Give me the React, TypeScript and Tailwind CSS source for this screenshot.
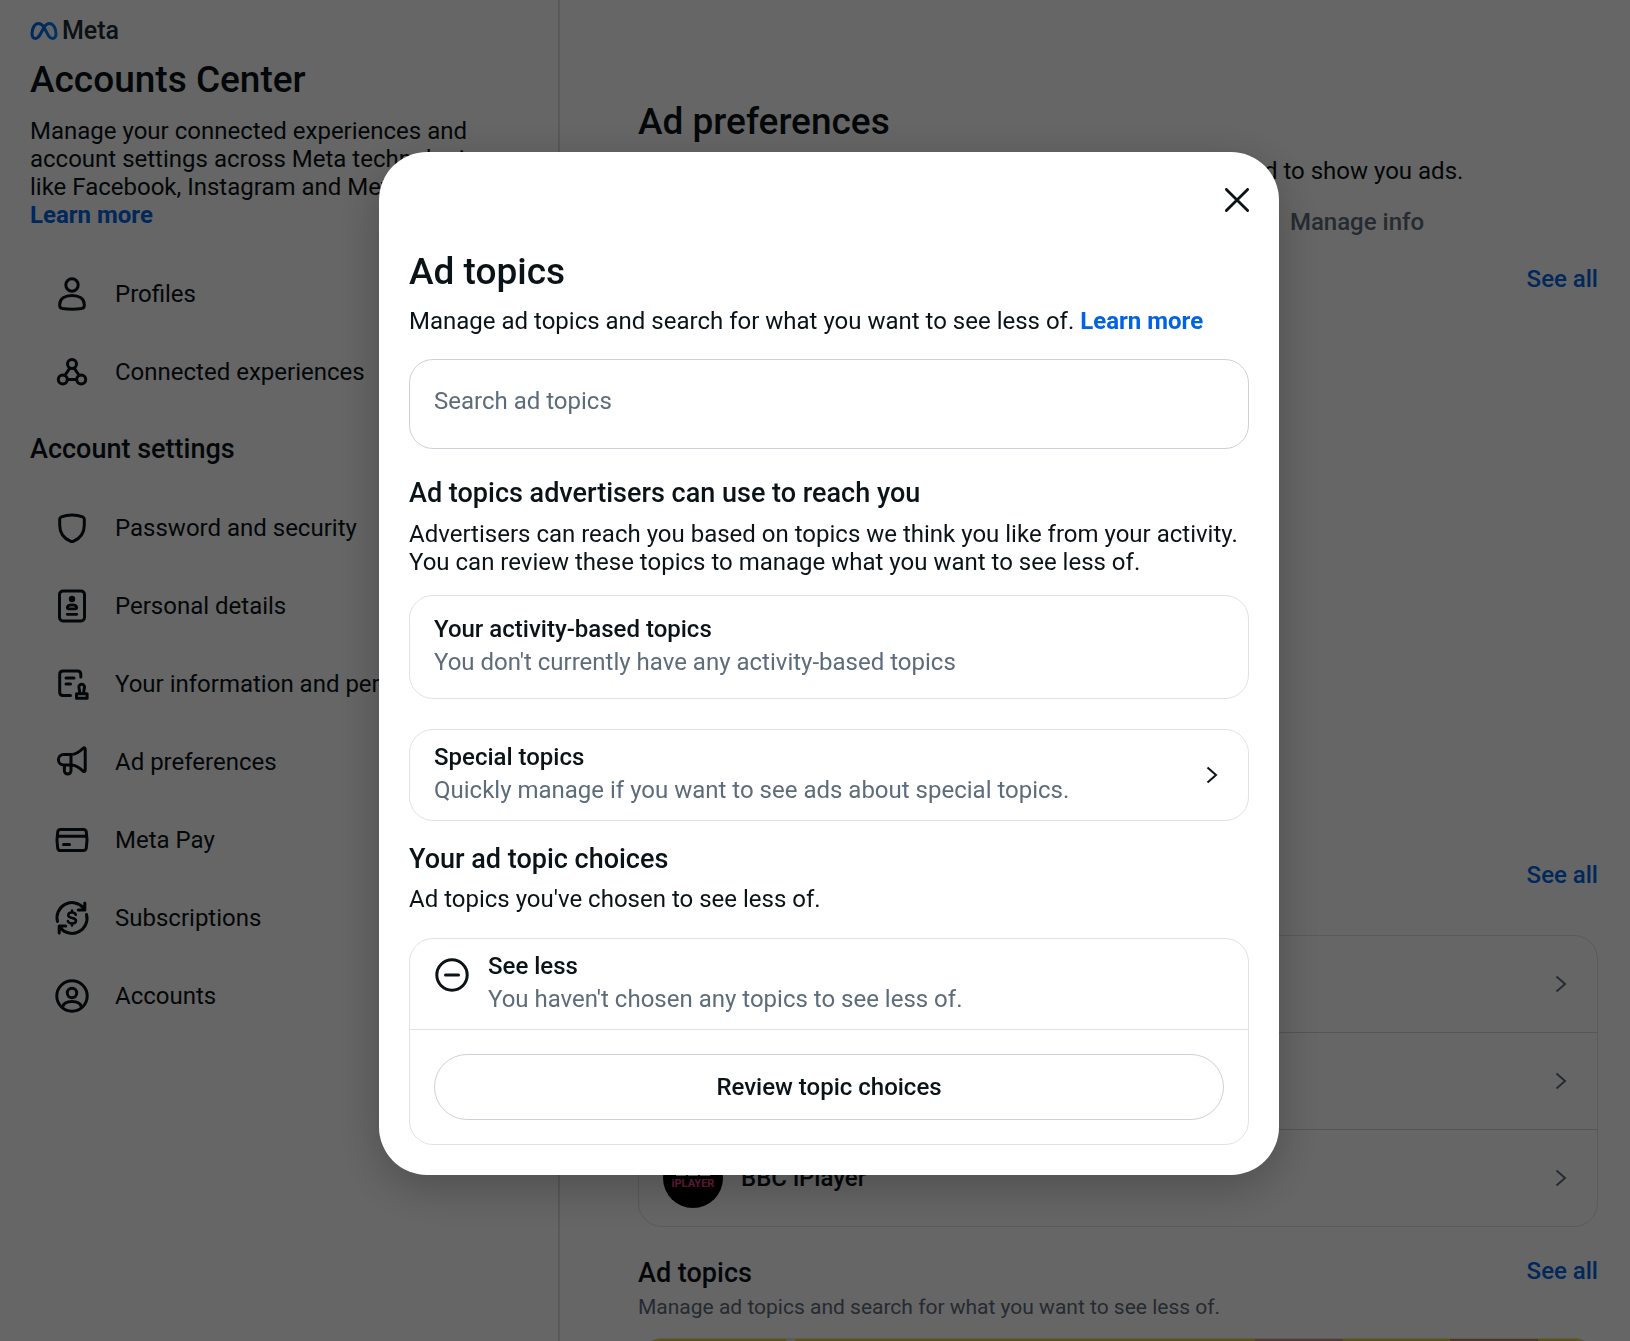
import { useState } from 'react';
import type { ReactNode } from 'react';

interface NavItem {
  label: string;
  icon: ReactNode;
}

const stroke = {
  fill: 'none',
  stroke: 'currentColor',
  strokeWidth: 3,
  strokeLinecap: 'round' as const,
  strokeLinejoin: 'round' as const,
};

function Icon({ children }: { children: ReactNode }) {
  return (
    <svg viewBox="0 0 36 36" className="size-9 shrink-0" aria-hidden="true" {...stroke}>
      {children}
    </svg>
  );
}

function Chevron({ className = '' }: { className?: string }) {
  return (
    <svg viewBox="0 0 12 18" className={`h-[18px] w-3 shrink-0 ${className}`} aria-hidden="true" fill="none" stroke="currentColor" strokeWidth="2">
      <path d="M1.5 1.500 10 9l-8.500 7.500" />
    </svg>
  );
}

function MetaMark() {
  return (
    <svg viewBox="0 0 28 20" className="h-5 w-7 shrink-0" aria-hidden="true" fill="none" strokeWidth="3">
      <defs>
        <linearGradient id="meta-mark" x1="0" x2="1" y1="0" y2="0">
          <stop offset="0" stopColor="#0064e0" />
          <stop offset="0.6" stopColor="#0073ee" />
          <stop offset="1" stopColor="#0082fb" />
        </linearGradient>
      </defs>
      <path
        stroke="url(#meta-mark)"
        d="M14 6.2C12 3.2 10.3 2.4 8.4 2.4 4.6 2.4 2 7.6 2 12.6c0 3.2 1.3 5 3.6 5 2.4 0 3.8-1.9 8.4-11.4 1.7-2.7 3.4-3.8 5.4-3.8 3.9 0 6.6 5 6.6 10.2 0 3.2-1.3 5-3.5 5-2.6 0-3.9-2-8.5-11.4Z"
      />
    </svg>
  );
}

const MAIN_NAV: NavItem[] = [
  {
    label: 'Profiles',
    icon: (
      <Icon>
        <circle cx="18" cy="9" r="6.2" />
        <path d="M5.7 28.6C5.7 22.4 11 19.4 18 19.4s12.3 3 12.3 9.2v1.1c0 1.6-1 2.4-2.6 2.7-5.6.9-13.8.9-19.4 0-1.6-.3-2.6-1.1-2.6-2.7Z" />
      </Icon>
    ),
  },
  {
    label: 'Connected experiences',
    icon: (
      <Icon>
        <circle cx="18" cy="10" r="4.5" />
        <circle cx="8.8" cy="25.6" r="4.5" />
        <circle cx="27.2" cy="25.6" r="4.5" />
        <path d="M13.3 25.6h9.4M15.8 14.2l-5 7.3M20.2 14.2l5 7.3" />
      </Icon>
    ),
  },
];

const SETTINGS_NAV: NavItem[] = [
  {
    label: 'Password and security',
    icon: (
      <Icon>
        <path d="M18 5c4 0 7.6.7 10.6 1.900 1 .4 1.700 1.300 1.700 2.400v5.700c0 7.400-4 13.200-10.600 16.200-1.100.5-2.300.5-3.400 0C9.700 28.200 5.700 22.400 5.700 15V9.300c0-1.100.7-2 1.700-2.400C10.400 5.700 14 5 18 5Z" />
      </Icon>
    ),
  },
  {
    label: 'Personal details',
    icon: (
      <Icon>
        <rect x="5.5" y="3" width="25" height="30" rx="3.5" />
        <circle cx="18" cy="11" r="3.2" fill="currentColor" stroke="none" />
        <path d="M13.3 19.8c0-2 2-3 4.7-3s4.7 1 4.700 3c0 .7-.4 1-1 1h-7.400c-.6 0-1-.3-1-1ZM13.200 26.300h9.600" strokeWidth="2.8" />
      </Icon>
    ),
  },
  {
    label: 'Your information and permissions',
    icon: (
      <Icon>
        <path d="M16.5 29.5H9c-2 0-3.3-1.3-3.3-3.3v-18C5.7 6.200 7 4.900 9 4.900h14.500c2 0 3.300 1.300 3.300 3.300V11M12 12h8M12 18h4.500" />
        <path d="M25.5 27.5c.6-2.5-.6-4.6-.6-6.5a2.800 2.800 0 0 1 5.600 0c0 1.900-1.200 4-.6 6.500M22.500 32.300v-4.500h10.600v4.500Z" />
      </Icon>
    ),
  },
  {
    label: 'Ad preferences',
    icon: (
      <Icon>
        <path d="M17.5 10.5H9.6a5.2 5.2 0 0 0 0 10.4h7.9c3.3 0 7.5 2.2 11.6 6.2.9.9 2.1.4 2.1-.9V5.200c0-1.300-1.200-1.800-2.100-.9-4.100 4-8.300 6.200-11.600 6.200ZM17 10.500v16.300a3.300 3.300 0 0 1-6.600 0v-5.900" />
      </Icon>
    ),
  },
  {
    label: 'Meta Pay',
    icon: (
      <Icon>
        <path d="M6.5 7.5h23c1.5 0 2.5.9 2.8 2.4.9 5 .9 11.200 0 16.200-.3 1.500-1.300 2.400-2.800 2.400h-23c-1.500 0-2.500-.9-2.800-2.400-.9-5-.9-11.200 0-16.200.3-1.500 1.300-2.400 2.800-2.400ZM3.500 14.200h29M9.500 22.500h6" />
      </Icon>
    ),
  },
  {
    label: 'Subscriptions',
    icon: (
      <Icon>
        <path d="M3.5 21.5A15 15 0 0 1 29.500 8M32.500 14.500A15 15 0 0 1 6.500 28M30.800 3v7h-6.500M5.200 33v-7h6.500" />
        <path d="M21.800 14.800c-.5-1.600-2-2.200-3.800-2.200-2.200 0-3.800 1-3.800 2.700 0 3.800 7.800 1.600 7.800 5.400 0 1.700-1.600 2.700-4 2.700-2.100 0-3.700-.8-4.100-2.400M18 10.500v2M18 23.500v2" strokeWidth="2.500" />
      </Icon>
    ),
  },
  {
    label: 'Accounts',
    icon: (
      <Icon>
        <circle cx="18" cy="18" r="15.2" />
        <circle cx="18" cy="15" r="4.7" />
        <path d="M8.5 29c1-3.700 4.700-5.500 9.500-5.500s8.500 1.800 9.500 5.500" />
      </Icon>
    ),
  },
];

const ADVERTISERS = ['Booking.com', 'Amazon', 'BBC iPlayer'];

function NavList({ items }: { items: NavItem[] }) {
  return (
    <ul>
      {items.map((item) => (
        <li key={item.label}>
          <a href="#" className="flex h-[78px] items-center gap-[25px] pl-6 whitespace-nowrap">
            {item.icon}
            <span>{item.label}</span>
          </a>
        </li>
      ))}
    </ul>
  );
}

function Sidebar() {
  return (
    <aside className="w-[560px] shrink-0 border-r-2 border-[#dedbe8] px-[30px] pt-4">
      <div className="flex h-[30px] items-center gap-1 text-[#1c2b33]">
        <MetaMark />
        <span className="text-[25px] font-medium">Meta</span>
      </div>
      <h1 className="mt-3 text-[37px] leading-[44px] font-medium">Accounts Center</h1>
      <p className="mt-[15px] max-w-[470px] leading-7">
        Manage your connected experiences and account settings across Meta technologies like Facebook, Instagram and
        Meta Horizon.{' '}
        <a href="#" className="block font-bold text-[#0064e0]">
          Learn more
        </a>
      </p>
      <nav className="mt-[26px]">
        <NavList items={MAIN_NAV} />
        <h2 className="flex h-[78px] items-center text-[27px] font-medium">Account settings</h2>
        <NavList items={SETTINGS_NAV} />
      </nav>
    </aside>
  );
}

function SeeAll() {
  return (
    <a href="#" className="leading-7 font-medium text-[#0064e0]">
      See all
    </a>
  );
}

function IPlayerLogo() {
  return (
    <span className="flex size-[60px] flex-col items-center justify-center rounded-full bg-black">
      <span className="flex gap-0.5 text-[9px] leading-[11px] font-bold">
        <span className="bg-white px-0.5">B</span>
        <span className="bg-white px-0.5">B</span>
        <span className="bg-white px-0.5">C</span>
      </span>
      <span className="text-[11px] leading-4 font-bold text-[#f54997]">iPLAYER</span>
    </span>
  );
}

function AdPreferences() {
  return (
    <main className="min-w-0 flex-1 pt-[100px] pr-8 pl-[78px]">
      <h1 className="text-[37px] leading-[44px] font-medium">Ad preferences</h1>
      <p className="mt-[13px] leading-7 whitespace-nowrap">
        Take control of your ad experience and the information used to show you ads.
      </p>
      <div role="tablist" className="mt-[23px] grid grid-cols-2 pr-3 text-center leading-7 font-medium">
        <button type="button" role="tab" aria-selected="true">
          Customize ads
        </button>
        <button type="button" role="tab" aria-selected="false" className="pl-4 text-[#5d6c7b]">
          Manage info
        </button>
      </div>
      <section className="mt-[27px] h-[596px]">
        <div className="flex items-center justify-between leading-8">
          <h2 className="text-[27px] font-medium">Ads you've seen</h2>
          <SeeAll />
        </div>
      </section>
      <section>
        <div className="flex items-center justify-between leading-8">
          <h2 className="text-[27px] font-medium">Advertisers you saw</h2>
          <SeeAll />
        </div>
        <ul className="mt-11 divide-y divide-[#d5d6dc] rounded-3xl border border-[#dfe0e4]">
          {ADVERTISERS.map((name) => (
            <li key={name}>
              <a href="#" className="flex h-24 items-center gap-[18px] pr-[30px] pl-6 font-medium">
                {name === 'BBC iPlayer' ? <IPlayerLogo /> : <span className="size-[60px] rounded-full bg-[#dee3e9]" />}
                <span className="flex-1">{name}</span>
                <Chevron className="text-[#5d6c7b]" />
              </a>
            </li>
          ))}
        </ul>
      </section>
      <section className="mt-[30px]">
        <div className="flex items-start justify-between leading-8">
          <h2 className="text-[27px] font-medium">Ad topics</h2>
          <SeeAll />
        </div>
        <p className="mt-1 text-[21px] leading-7 text-[#5d6c7b]">
          Manage ad topics and search for what you want to see less of.
        </p>
        {/* topic poster, mostly below the fold */}
        <div className="mt-[17px] flex h-40 overflow-hidden rounded-3xl border border-[#dee3e9] bg-[#e3d22c]">
          <div className="flex-[15]" />
          <div className="flex-1 bg-[#e6e0cf]" />
          <div className="flex-[47]" />
          <div className="flex-[9] bg-[#d4937f]" />
          <div className="flex-[11]" />
          <div className="flex-[9] bg-[#c98a55]" />
          <div className="flex-[6]" />
        </div>
      </section>
    </main>
  );
}

function AdTopicsDialog() {
  const [query, setQuery] = useState('');

  return (
    <div className="fixed inset-0 flex items-center justify-center bg-black/60 pb-3.5 pl-7">
      <div
        role="dialog"
        aria-modal="true"
        aria-labelledby="dialog-title"
        className="w-[900px] rounded-[48px] bg-white px-[30px] pb-[30px] shadow-[0_12px_48px_rgba(0,0,0,0.25)]"
      >
        <div className="flex h-24 items-center justify-end">
          <button type="button" aria-label="Close">
            <svg viewBox="0 0 24 24" className="size-6" fill="none" stroke="currentColor" strokeWidth="2.8" strokeLinecap="round">
              <path d="m1.400 1.400 21.200 21.200M22.600 1.400 1.400 22.600" />
            </svg>
          </button>
        </div>
        <h2 id="dialog-title" className="mt-0.5 text-[37px] leading-[44px] font-medium">
          Ad topics
        </h2>
        <p className="mt-[13px] leading-7">
          Manage ad topics and search for what you want to see less of.{' '}
          <a href="#" className="font-bold text-[#0064e0]">
            Learn more
          </a>
        </p>
        <input
          type="search"
          aria-label="Search ad topics"
          placeholder="Search ad topics"
          value={query}
          onChange={(e) => setQuery(e.target.value)}
          className="mt-6 block h-[90px] w-full rounded-3xl border border-[#cbd2d9] px-6 pb-1.5 placeholder:text-[#5d6c7b]"
        />

        <h3 className="mt-7 text-[27px] leading-8 font-medium">Ad topics advertisers can use to reach you</h3>
        <p className="mt-[11px] leading-7">
          Advertisers can reach you based on topics we think you like from your activity. You can review these topics to
          manage what you want to see less of.
        </p>

        <div className="mt-[19px] h-[104px] rounded-3xl border border-[#dee3e9] px-6 pt-[17px] leading-[33px]">
          <p className="font-medium">Your activity-based topics</p>
          <p className="text-[#5d6c7b]">You don't currently have any activity-based topics</p>
        </div>

        <button
          type="button"
          className="mt-[30px] flex h-[92px] w-full items-center rounded-3xl border border-[#dee3e9] pr-[30px] pl-6 text-left leading-[33px]"
        >
          <span className="flex-1 pb-0.5">
            <span className="block font-medium">Special topics</span>
            <span className="block text-[#5d6c7b]">Quickly manage if you want to see ads about special topics.</span>
          </span>
          <Chevron />
        </button>

        <h3 className="mt-[22px] text-[27px] leading-8 font-medium">Your ad topic choices</h3>
        <p className="mt-[10px] leading-7">Ad topics you've chosen to see less of.</p>

        <div className="mt-[25px] rounded-3xl border border-[#dee3e9]">
          <div className="flex h-[91px] gap-[18px] border-b border-[#dee3e9] px-6 pt-[11px] leading-[33px]">
            <svg viewBox="0 0 36 36" className="mt-[7px] size-9 shrink-0" aria-hidden="true" {...stroke}>
              <circle cx="18" cy="18" r="15.2" />
              <path d="M11.5 18h13" />
            </svg>
            <div>
              <p className="font-medium">See less</p>
              <p className="text-[#5d6c7b]">You haven't chosen any topics to see less of.</p>
            </div>
          </div>
          <div className="p-6">
            <button type="button" className="block h-[66px] w-full rounded-full border border-[#cbd2d9] font-medium">
              Review topic choices
            </button>
          </div>
        </div>
      </div>
    </div>
  );
}

export default function App() {
  return (
    <div className="h-screen overflow-hidden bg-white font-['Roboto',sans-serif] text-2xl text-[#0a1317]">
      <div className="flex min-h-full">
        <Sidebar />
        <AdPreferences />
      </div>
      <AdTopicsDialog />
    </div>
  );
}
